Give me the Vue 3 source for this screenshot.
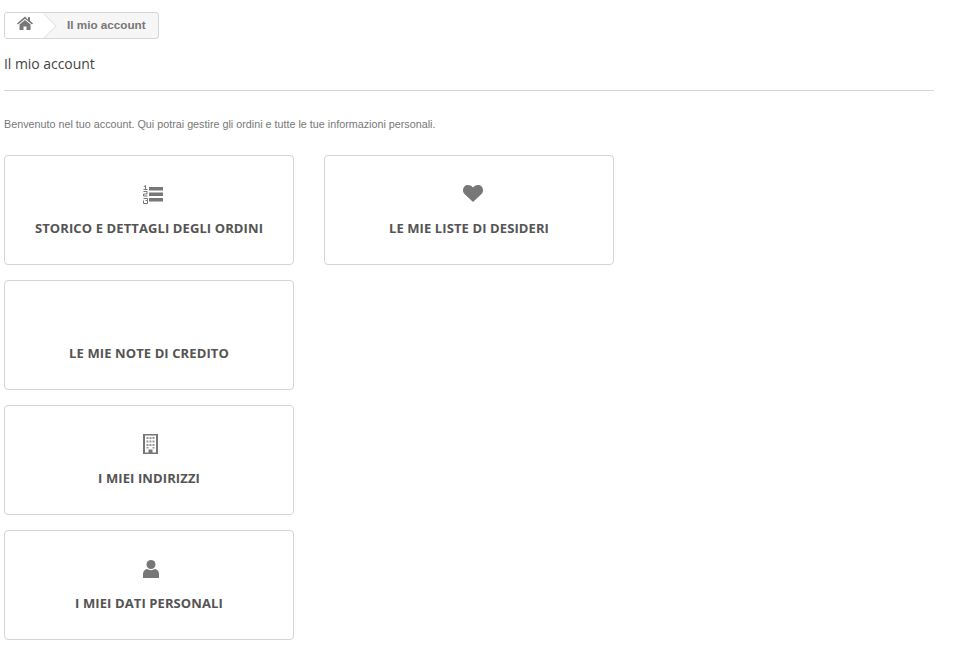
<script setup>
const cards = [
  { label: 'STORICO E DETTAGLI DEGLI ORDINI', icon: 'list' },
  { label: 'LE MIE LISTE DI DESIDERI', icon: 'heart' },
  { label: 'LE MIE NOTE DI CREDITO', icon: 'none' },
  { label: 'I MIEI INDIRIZZI', icon: 'building' },
  { label: 'I MIEI DATI PERSONALI', icon: 'user' }
]
</script>

<template>
  <div class="page">
    <nav class="crumb">
      <a class="home">
        <svg width="16" height="14" viewBox="0 0 16 14" fill="#777">
          <path d="M8 .6 0 7.4l1 1.2L8 2.700l7 5.900 1-1.200-3-2.600V1.200h-2v2.500L8 .6Z" />
          <path d="M8 4 2.500 8.600V14h4v-3.600h3V14h4V8.600L8 4Z" />
        </svg>
      </a>
      <span class="arrow"></span>
      <span class="current">Il mio account</span>
    </nav>
    <h1 class="title">Il mio account</h1>
    <p class="info">Benvenuto nel tuo account. Qui potrai gestire gli ordini e tutte le tue informazioni personali.</p>
    <div class="grid">
      <a v-for="(c, i) in cards" :key="c.label" class="card" :class="{ second: i === 1 }">
        <span class="icon">
          <svg v-if="c.icon === 'list'" class="i-list" width="20" height="20" viewBox="0 0 20 20" fill="#777">
            <path d="M6 2h14v3.500H6zM6 7.500h14V11H6zM6 13h14v3.500H6z" />
            <path fill="none" stroke="#777" stroke-width="1" d="M1 1.500 2.500.5v4M.5 4.500h4M.5 6.500h3.500v2.500h-3.500v2h4M.5 13.500h4v2h-2M4.500 15.500v3H.5v-3" />
          </svg>
          <svg v-else-if="c.icon === 'heart'" class="i-heart" width="20" height="17" viewBox="0 0 20 17" fill="#777">
            <path d="M10 17 1.500 9C-.5 7-.5 3.500 1.500 1.500 3.500-.5 7-.5 10 2.500 13-.5 16.500-.5 18.500 1.500c2 2 2 5.500 0 7.500L10 17Z" />
          </svg>
          <svg v-else-if="c.icon === 'building'" class="i-building" width="15" height="20" viewBox="0 0 15 20" fill="#777">
            <path fill-rule="evenodd" d="M0 0h15v20H0V0Zm2 1.500V18.500h3.500v-3h4v3H13V1.500H2Z" />
            <path d="M3.500 3h2v2h-2zM6.500 3h2v2h-2zM9.500 3h2v2h-2zM3.500 6.500h2v2h-2zM6.500 6.500h2v2h-2zM9.500 6.500h2v2h-2zM3.500 10h2v2h-2zM6.500 10h2v2h-2zM9.500 10h2v2h-2zM3.500 13h2v1.500h-2zM9.500 13h2v1.500h-2z" opacity=".75" />
          </svg>
          <svg v-else-if="c.icon === 'user'" class="i-user" width="16" height="18" viewBox="0 0 16 18" fill="#777">
            <ellipse cx="8" cy="4.500" rx="4.500" ry="4.500" />
            <path d="M0 18v-4c0-3 2-4.500 4-5 2.500 1.500 5.500 1.500 8 0 2 .5 4 2 4 5v4H0Z" />
          </svg>
        </span>
        <span class="label">{{ c.label }}</span>
      </a>
    </div>
  </div>
</template>

<style scoped>
.page {
  padding: 12px 24px 15px 4px;
  font-family: "Liberation Sans", Arial, sans-serif;
  font-size: 11px;
  color: #777;
}
.crumb {
  display: flex;
  align-items: center;
  width: 155px;
  height: 27px;
  box-sizing: border-box;
  border: 1px solid #d6d4d4;
  border-radius: 3px;
  background: #f6f6f6;
  position: relative;
  overflow: hidden;
}
.home {
  display: flex;
  justify-content: center;
  width: 39px;
  height: 100%;
  padding: 3px 0 0 0;
  box-sizing: border-box;
  background: #fff;
}
.arrow {
  position: absolute;
  left: 29.500px;
  top: 3.500px;
  width: 17px;
  height: 17px;
  background: #fff;
  border-top: 1px solid #e4e4e4;
  border-right: 1px solid #e4e4e4;
  transform: rotate(45deg);
}
.current {
  margin-left: 23px;
  font-size: 11.700px;
  font-weight: 700;
  color: #777;
  position: relative;
  top: -1px;
}
.title {
  margin: 16px 0 0;
  height: 35px;
  border-bottom: 1px solid #d6d4d4;
  font-family: "Open Sans", sans-serif;
  font-size: 14px;
  line-height: 18px;
  font-weight: 400;
  color: #444;
  letter-spacing: -0.05px;
}
.info {
  margin: 27px 0 0;
  line-height: 13px;
  font-size: 10.770px;
  color: #777;
}
.grid {
  display: grid;
  grid-template-columns: 290px 290px;
  column-gap: 30px;
  row-gap: 15px;
  margin-top: 24px;
}
.card {
  grid-column: 1;
  height: 110px;
  box-sizing: border-box;
  border: 1px solid #d6d4d4;
  border-radius: 4px;
  display: flex;
  flex-direction: column;
  align-items: center;
}
.card.second {
  grid-column: 2;
  grid-row: 1;
}
.icon {
  height: 29px;
  margin-top: 29px;
  display: flex;
  align-items: flex-start;
}
.i-heart { margin: 0 0 0 8px; }
.i-building { margin: -1px 0 0 3px; }
.i-user { margin: 0 0 0 3px; }
.i-list { margin: 0 0 0 8px; }
.label {
  margin-top: 5px;
  font-family: "Open Sans", sans-serif;
  font-size: 13px;
  line-height: 19px;
  font-weight: 700;
  letter-spacing: 0.1px;
  color: #555454;
}
</style>
